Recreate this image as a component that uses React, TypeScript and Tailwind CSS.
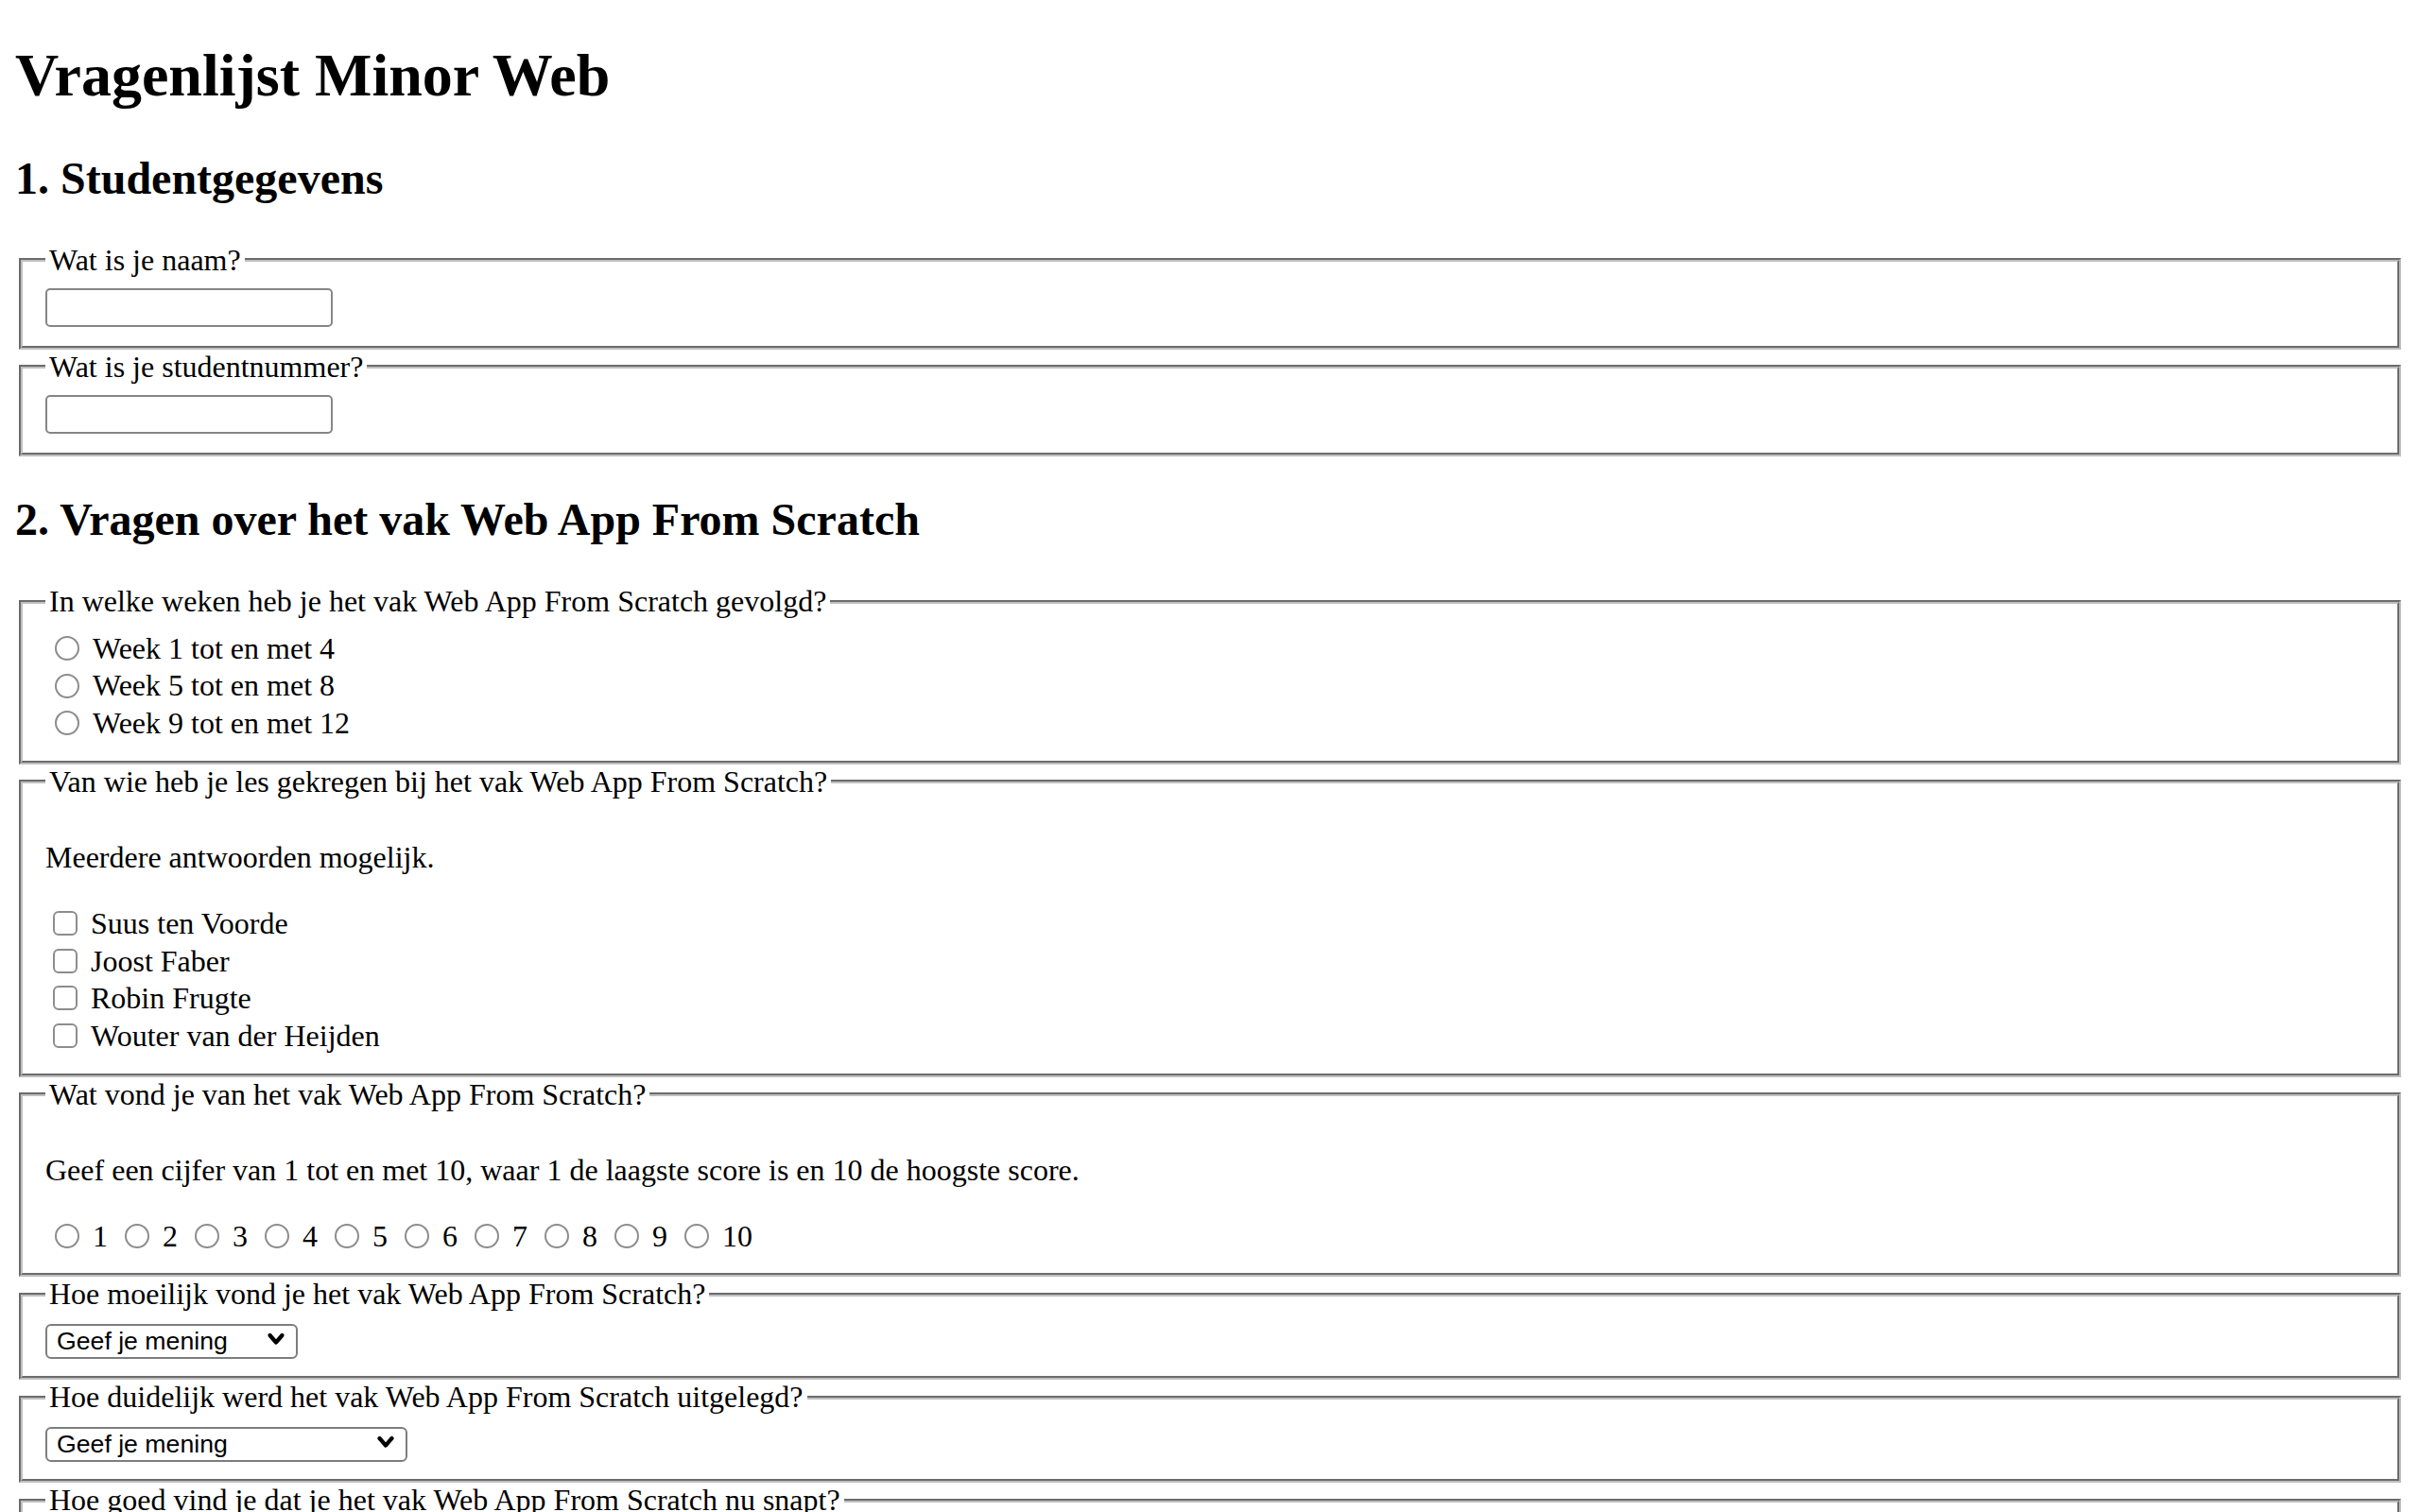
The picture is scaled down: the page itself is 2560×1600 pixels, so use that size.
import React from 'react';

function Field({ legend, children }: { legend: string; children: React.ReactNode }) {
  return (
    <fieldset className="mx-[4px] [border-width:4px] [border-style:groove] border-[#c0c0c0] px-[24px] pt-[11.2px] pb-[20px]">
      <legend className="px-[4px]">{legend}</legend>
      {children}
    </fieldset>
  );
}

function Radio({ name }: { name: string }) {
  return (
    <input
      type="radio"
      name={name}
      className="appearance-none shrink-0 w-[26px] h-[26px] rounded-full border-2 border-[#8d8d8d] bg-white ml-[10px] mr-[14px]"
    />
  );
}

function Select({ width, options }: { width: string; options: string[] }) {
  return (
    <div className={`relative h-[37px] ${width}`}>
      <select className="appearance-none w-full h-full border-2 border-[#7d7d7d] rounded-[6px] bg-white pl-[10px] font-['Liberation_Sans',Arial,sans-serif] text-[26.67px] leading-none text-black">
        {options.map((o) => (
          <option key={o}>{o}</option>
        ))}
      </select>
      <svg
        className="absolute right-[13px] top-[11px] w-[20px] h-[14px] pointer-events-none"
        viewBox="0 0 20 14"
      >
        <path d="M3.5 3 L10 10.5 L16.5 3" fill="none" stroke="#000" strokeWidth="4.2" strokeLinecap="round" strokeLinejoin="round" />
      </svg>
    </div>
  );
}

export default function App() {
  const weeks = ['Week 1 tot en met 4', 'Week 5 tot en met 8', 'Week 9 tot en met 12'];
  const teachers = ['Suus ten Voorde', 'Joost Faber', 'Robin Frugte', 'Wouter van der Heijden'];
  const opinion = ['Geef je mening', 'Heel makkelijk', 'Makkelijk', 'Neutraal', 'Moeilijk', 'Heel moeilijk'];
  const clarity = ['Geef je mening', 'Heel duidelijk uitgelegd', 'Duidelijk uitgelegd', 'Neutraal', 'Onduidelijk uitgelegd'];
  const grasp = ['Geef je mening', 'Ik snap het helemaal', 'Ik snap het grotendeels', 'Neutraal', 'Ik snap het niet'];

  return (
    <div className="px-[16px] pb-[16px] bg-white text-black font-['Liberation_Serif','Times_New_Roman',serif] text-[32px] leading-[36.8px]">
      <h1 className="my-[42.88px] text-[64px] leading-[74.8px] font-bold">Vragenlijst Minor Web</h1>

      <h2 className="my-[39.84px] text-[48px] leading-[56.2px] font-bold">1. Studentgegevens</h2>
      <form>
        <Field legend="Wat is je naam?">
          <input type="text" className="block w-[304px] h-[41px] border-2 border-[#868686] rounded-[5px] bg-white" />
        </Field>
        <Field legend="Wat is je studentnummer?">
          <input type="text" className="block w-[304px] h-[41px] border-2 border-[#868686] rounded-[5px] bg-white" />
        </Field>

        <h2 className="my-[39.84px] text-[48px] leading-[56.2px] font-bold">2. Vragen over het vak Web App From Scratch</h2>

        <Field legend="In welke weken heb je het vak Web App From Scratch gevolgd?">
          {weeks.map((w) => (
            <label key={w} className="flex items-center h-[39.5px]">
              <Radio name="weken" />
              {w}
            </label>
          ))}
        </Field>

        <Field legend="Van wie heb je les gekregen bij het vak Web App From Scratch?">
          <p className="my-[32px]">Meerdere antwoorden mogelijk.</p>
          {teachers.map((t) => (
            <label key={t} className="flex items-center h-[39.5px]">
              <input
                type="checkbox"
                className="appearance-none shrink-0 w-[26px] h-[26px] rounded-[6px] border-2 border-[#8d8d8d] bg-white ml-[8px] mr-[14px]"
              />
              {t}
            </label>
          ))}
        </Field>

        <Field legend="Wat vond je van het vak Web App From Scratch?">
          <p className="my-[32px]">Geef een cijfer van 1 tot en met 10, waar 1 de laagste score is en 10 de hoogste score.</p>
          <div className="flex items-center h-[39px]">
            {[1, 2, 3, 4, 5, 6, 7, 8, 9, 10].map((n) => (
              <label key={n} className="flex items-center">
                <Radio name="cijfer" />
                <span className="mr-[8px]">{n}</span>
              </label>
            ))}
          </div>
        </Field>

        <Field legend="Hoe moeilijk vond je het vak Web App From Scratch?">
          <Select width="w-[267px]" options={opinion} />
        </Field>

        <Field legend="Hoe duidelijk werd het vak Web App From Scratch uitgelegd?">
          <Select width="w-[383px]" options={clarity} />
        </Field>

        <Field legend="Hoe goed vind je dat je het vak Web App From Scratch nu snapt?">
          <Select width="w-[383px]" options={grasp} />
        </Field>
      </form>
    </div>
  );
}
